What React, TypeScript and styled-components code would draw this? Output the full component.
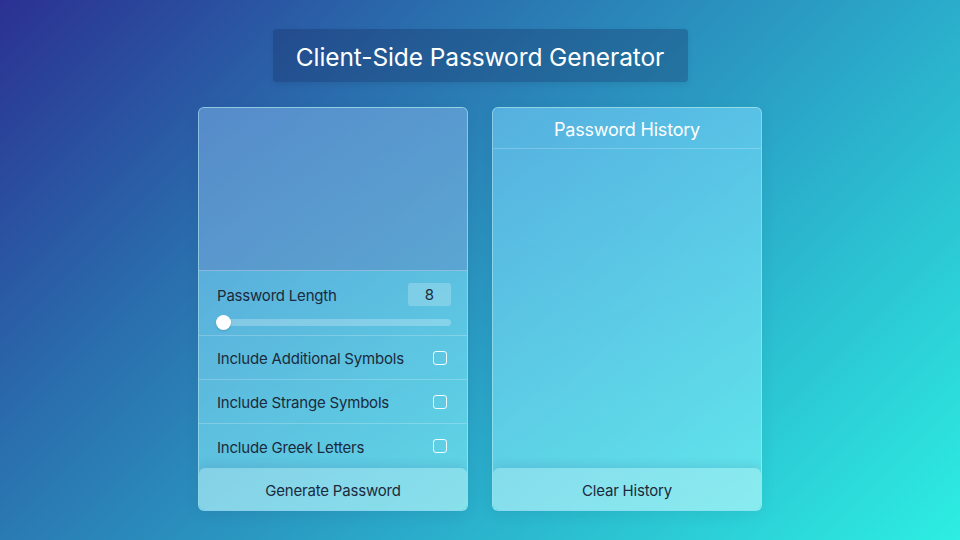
import React from "react";
import styled, { createGlobalStyle } from "styled-components";

const Global = createGlobalStyle`
  html, body { margin: 0; padding: 0; }
  body {
    width: 960px;
    height: 540px;
    overflow: hidden;
    font-family: "Inter", "Lato", "Liberation Sans", sans-serif;
    background: linear-gradient(135deg, #2b3192 0%, #2a6fae 30%, #2aa6c8 60%, #2deee2 100%);
  }
`;

const Page = styled.div`
  width: 960px;
  height: 540px;
  display: flex;
  flex-direction: column;
  align-items: center;
  padding-top: 29px;
  box-sizing: border-box;
`;

const TitleBox = styled.h1`
  margin: 0;
  height: 53px;
  width: 415px;
  box-sizing: border-box;
  padding-top: 2px;
  display: flex;
  align-items: center;
  justify-content: center;
  background: rgba(20, 40, 90, 0.3);
  border-radius: 4px;
  color: #ffffff;
  font-size: 24.5px;
  font-weight: 400;
  letter-spacing: -0.1px;
  box-shadow: 0 2px 6px rgba(0, 0, 0, 0.08);
`;

const Panels = styled.div`
  display: flex;
  gap: 24px;
  margin-top: 25px;
`;

const Panel = styled.section`
  width: 270px;
  height: 404px;
  box-sizing: border-box;
  display: flex;
  flex-direction: column;
  background: linear-gradient(160deg, rgba(121, 212, 255, 0.56) 0%, rgba(136, 244, 248, 0.58) 100%);
  border: 1px solid rgba(255, 255, 255, 0.3);
  border-radius: 6px;
  overflow: hidden;
  box-shadow: 0 4px 16px rgba(0, 0, 0, 0.06);
`;

const Display = styled.div`
  height: 162px;
  background: rgba(90, 60, 150, 0.2);
  border-bottom: 1px solid rgba(255, 255, 255, 0.3);
`;

const LengthSection = styled.div`
  height: 66px;
  box-sizing: border-box;
  padding: 12px 16px 0 18px;
  border-bottom: 1px solid rgba(255, 255, 255, 0.22);
`;

const LengthRow = styled.div`
  display: flex;
  justify-content: space-between;
  align-items: center;
  height: 23px;
`;

const Label = styled.span`
  color: #1b2a3c;
  font-size: 15px;
  letter-spacing: -0.2px;
  padding-top: 2px;
`;

const NumberBox = styled.div`
  width: 43px;
  height: 23px;
  box-sizing: border-box;
  padding-top: 1px;
  border-radius: 3px;
  background: rgba(255, 255, 255, 0.22);
  display: flex;
  align-items: center;
  justify-content: center;
  color: #1b2a3c;
  font-size: 15px;
`;

const Slider = styled.div`
  position: relative;
  margin-top: 13px;
  margin-left: -1px;
  height: 7px;
  border-radius: 4px;
  background: rgba(255, 255, 255, 0.25);
`;

const Thumb = styled.div`
  position: absolute;
  left: 0;
  top: 50%;
  width: 15px;
  height: 15px;
  margin-top: -7.5px;
  border-radius: 50%;
  background: #ffffff;
  box-shadow: 0 1px 2px rgba(0, 0, 0, 0.15);
`;

const CheckRow = styled.label<{ $last?: boolean }>`
  height: 44px;
  box-sizing: border-box;
  display: flex;
  align-items: center;
  justify-content: space-between;
  padding: 0 20px 0 18px;
  border-bottom: ${(p) => (p.$last ? "none" : "1px solid rgba(255, 255, 255, 0.22)")};
`;

const Box = styled.span`
  width: 14px;
  height: 14px;
  box-sizing: border-box;
  border: 1.5px solid rgba(255, 255, 255, 0.9);
  border-radius: 3px;
`;

const Spacer = styled.div`
  flex: 1;
`;

const Button = styled.button`
  height: 42px;
  flex: none;
  border: none;
  border-radius: 6px;
  padding-top: 3px;
  background: rgba(255, 255, 255, 0.25);
  color: #1b2a3c;
  font-family: inherit;
  font-size: 15px;
  letter-spacing: -0.2px;
  box-shadow: 0 -3px 10px rgba(40, 60, 120, 0.12);
  cursor: pointer;
`;

const HistoryHeader = styled.div`
  height: 41px;
  box-sizing: border-box;
  padding-top: 2px;
  display: flex;
  align-items: center;
  justify-content: center;
  color: #ffffff;
  font-size: 18px;
  letter-spacing: -0.2px;
  border-bottom: 1px solid rgba(255, 255, 255, 0.22);
`;

const options = [
  "Include Additional Symbols",
  "Include Strange Symbols",
  "Include Greek Letters",
];

export default function App() {
  return (
    <>
      <Global />
      <Page>
        <TitleBox>Client-Side Password Generator</TitleBox>
        <Panels>
          <Panel>
            <Display />
            <LengthSection>
              <LengthRow>
                <Label>Password Length</Label>
                <NumberBox>8</NumberBox>
              </LengthRow>
              <Slider>
                <Thumb />
              </Slider>
            </LengthSection>
            {options.map((o, i) => (
              <CheckRow key={o} $last={i === options.length - 1}>
                <Label>{o}</Label>
                <Box />
              </CheckRow>
            ))}
            <Spacer />
            <Button>Generate Password</Button>
          </Panel>
          <Panel>
            <HistoryHeader>Password History</HistoryHeader>
            <Spacer />
            <Button>Clear History</Button>
          </Panel>
        </Panels>
      </Page>
    </>
  );
}
